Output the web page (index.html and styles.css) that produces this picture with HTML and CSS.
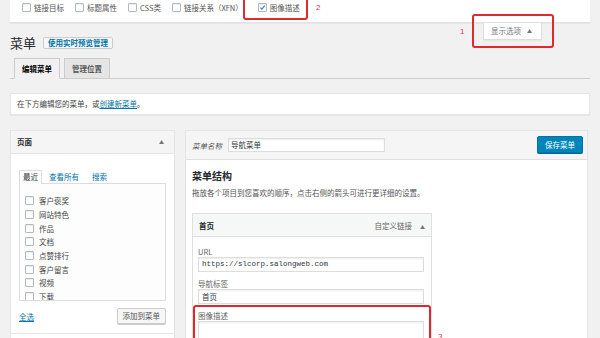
FILE: index.html
```html
<!DOCTYPE html>
<html lang="zh-CN">
<head>
<meta charset="utf-8">
<title>菜单</title>
<link rel="stylesheet" href="styles.css">
</head>
<body>
<div class="wrap">
  <div class="screen-options">
    <label class="opt"><span class="cb"></span>链接目标</label>
    <label class="opt"><span class="cb"></span>标题属性</label>
    <label class="opt"><span class="cb"></span>CSS类</label>
    <label class="opt"><span class="cb"></span>链接关系（XFN）</label>
    <label class="opt opt-last"><span class="cb"><svg viewBox="0 0 10 10" width="9" height="9"><path d="M2 5.2 L4.1 7.3 L8.2 2.2" fill="none" stroke="#1e8cbe" stroke-width="1.6"/></svg></span>图像描述</label>
  </div>
  <div class="meta-links"><span class="meta-tab">显示选项<span class="caret">▲</span></span></div>
  <h1 class="page-title">菜单<span class="title-action">使用实时预览管理</span></h1>
  <div class="nav-tabs"><span class="tab active">编辑菜单</span><span class="tab">管理位置</span></div>
  <div class="notice">在下方编辑您的菜单，或<a class="link">创建新菜单</a>。</div>
  <div class="columns">
    <div class="side">
      <div class="acc">
        <div class="acc-title">页面<span class="arrow">▲</span></div>
        <div class="acc-body">
          <ul class="ptabs"><li class="ptab active">最近</li><li class="ptab">查看所有</li><li class="ptab">搜索</li></ul>
          <div class="plist">
            <label class="item"><span class="cb"></span>客户褒奖</label>
            <label class="item"><span class="cb"></span>网站特色</label>
            <label class="item"><span class="cb"></span>作品</label>
            <label class="item"><span class="cb"></span>文档</label>
            <label class="item"><span class="cb"></span>点赞排行</label>
            <label class="item"><span class="cb"></span>客户留言</label>
            <label class="item"><span class="cb"></span>视频</label>
            <label class="item"><span class="cb"></span>下载</label>
          </div>
          <div class="pactions"><a class="link">全选</a><span class="btn">添加到菜单</span></div>
        </div>
      </div>
      <div class="acc"><div class="acc-title acc-title-next"></div></div>
    </div>
    <div class="manage">
      <div class="manage-head">
        <label class="menu-name"><span class="mn-label">菜单名称</span><span class="input name-input">导航菜单</span></label>
        <span class="btn-primary">保存菜单</span>
      </div>
      <div class="manage-body">
        <h3 class="struct-title">菜单结构</h3>
        <p class="desc">拖放各个项目到您喜欢的顺序，点击右侧的箭头可进行更详细的设置。</p>
        <div class="menu-item">
          <div class="mi-head"><span class="mi-title">首页</span><span class="mi-type">自定义链接<span class="arrow">▲</span></span></div>
          <div class="mi-body">
            <div class="field"><span class="flabel">URL</span><span class="input mono">https://slcorp.salongweb.com</span></div>
            <div class="field"><span class="flabel">导航标签</span><span class="input">首页</span></div>
            <div class="field"><span class="flabel">图像描述</span><span class="input textarea"></span></div>
          </div>
        </div>
      </div>
    </div>
  </div>
</div>
<div class="mark mark1"></div>
<div class="mark mark2"></div>
<div class="mark mark3"></div>
<span class="num num1">1</span>
<span class="num num2">2</span>
<span class="num num3">3</span>
</body>
</html>
```
FILE: styles.css
```css
* { box-sizing: border-box; }
html, body { margin: 0; padding: 0; }
body {
  background: #f1f1f1;
  font-family: "Noto Sans CJK SC", "Noto Sans", sans-serif;
  font-size: 7.5px;
  color: #444;
  width: 600px;
  height: 338px;
  overflow: hidden;
  position: relative;
}
.wrap { padding: 0 10px; }

.cb {
  display: inline-flex;
  align-items: center;
  justify-content: center;
  width: 9px;
  height: 9px;
  border: 1px solid #b4b9be;
  background: #fff;
  border-radius: 1px;
  box-shadow: inset 0 1px 1px rgba(0,0,0,.08);
  flex: none;
}
.cb svg { display: block; }

.screen-options {
  height: 23px;
  background: #fff;
  border-bottom: 1px solid #e2e2e2;
  box-shadow: 0 1px 1px rgba(0,0,0,.04);
  display: flex;
  align-items: flex-start;
  gap: 11px;
  padding: 2px 12px 0;
}
.opt { display: flex; align-items: center; gap: 3px; height: 11px; line-height: 11px; color: #555; }
.opt-last { margin-left: 4px; }

.meta-links { float: right; margin-right: 48px; }
.meta-tab {
  display: block;
  height: 17px;
  line-height: 16px;
  padding: 0 9px 0 7px;
  background: #fff;
  border: 1px solid #ddd;
  border-top: none;
  box-shadow: 0 1px 1px rgba(0,0,0,.04);
  color: #72777c;
}
.caret { font-size: 5px; margin-left: 6px; vertical-align: 1px; color: #72777c; }

.page-title {
  margin: 12px 0 0;
  font-size: 13px;
  line-height: 16px;
  font-weight: 400;
  color: #23282d;
  display: flex;
  align-items: center;
  gap: 7px;
}
.title-action {
  font-size: 7.5px;
  font-weight: 600;
  line-height: 10px;
  color: #0073aa;
  background: #f7f7f7;
  border: 1px solid #ccc;
  border-radius: 2px;
  padding: 0 4px;
}

.nav-tabs {
  clear: both;
  margin-top: 7px;
  display: flex;
  align-items: flex-end;
  gap: 4px;
  padding-left: 4px;
  border-bottom: 1px solid #ccc;
  height: 21px;
}
.tab {
  line-height: 19px;
  padding: 0 7px;
  border: 1px solid #ccc;
  margin-bottom: -1px;
  background: #e5e5e5;
  color: #555;
  font-weight: 600;
}
.tab.active { background: #f1f1f1; color: #000; border-bottom-color: #f1f1f1; }

.notice {
  margin-top: 14px;
  height: 22px;
  line-height: 20px;
  padding: 0 6px;
  background: #fff;
  border: 1px solid #e5e5e5;
  box-shadow: 0 1px 1px rgba(0,0,0,.04);
  color: #444;
}
.link { color: #0073aa; text-decoration: underline; }

.columns {
  margin-top: 15px;
  margin-right: 2px;
  display: grid;
  grid-template-columns: 165px 1fr;
  gap: 10px;
  align-items: start;
}

.acc { border: 1px solid #e5e5e5; background: #fff; box-shadow: 0 1px 1px rgba(0,0,0,.04); }
.acc + .acc { border-top: none; }
.acc-title {
  height: 23px;
  line-height: 22px;
  padding: 0 10px 0 6px;
  background: #f5f5f5;
  border-bottom: 1px solid #e5e5e5;
  font-weight: 600;
  color: #23282d;
  display: flex;
  justify-content: space-between;
}
.acc-title-next { background: #fff; }
.arrow { font-size: 5px; color: #72777c; font-weight: 400; }
.acc-body { padding: 16px 8px 9px; }
.ptabs { list-style: none; margin: 0; padding: 0; display: flex; gap: 1px; position: relative; z-index: 1; }
.ptab { line-height: 12px; padding: 0 5px; color: #0073aa; border: 1px solid transparent; border-bottom: none; }
.ptab.active { color: #32373c; background: #fdfdfd; border-color: #ddd; padding: 0 3px; margin-bottom: -1px; }
.plist {
  height: 118px;
  overflow: hidden;
  border: 1px solid #ddd;
  background: #fdfdfd;
  padding: 10px 5px 0;
}
.item { display: flex; align-items: center; gap: 5px; height: 13.7px; color: #444; }
.pactions { margin-top: 7px; display: flex; justify-content: space-between; align-items: center; padding-left: 0; }
.btn {
  height: 16px;
  line-height: 14px;
  padding: 0 5px;
  background: #f7f7f7;
  border: 1px solid #ccc;
  border-radius: 2px;
  box-shadow: 0 1px 0 #ccc;
  color: #555;
}

.manage { border: 1px solid #e5e5e5; background: #fff; box-shadow: 0 1px 1px rgba(0,0,0,.04); height: 240px; }
.manage-head {
  height: 29px;
  background: #f5f5f5;
  border-bottom: 1px solid #dfdfdf;
  display: flex;
  align-items: center;
  justify-content: space-between;
  padding: 0 4px 0 6px;
}
.menu-name { display: flex; align-items: center; gap: 6px; }
.mn-label { font-style: italic; color: #555; }
.input {
  display: block;
  background: #fff;
  border: 1px solid #ddd;
  box-shadow: inset 0 1px 2px rgba(0,0,0,.07);
  color: #32373c;
  height: 15px;
  line-height: 13px;
  padding: 0 3px;
}
.name-input { width: 157px; height: 14px; line-height: 12px; padding: 0 2px; }
.btn-primary {
  height: 17px;
  line-height: 15px;
  padding: 0 7px;
  background: #0085ba;
  border: 1px solid #0073aa;
  border-radius: 2px;
  box-shadow: 0 1px 0 #006799;
  color: #fff;
  margin-top: -1px;
}
.manage-body { padding: 9px 6px 0; }
.struct-title { margin: 0; font-size: 10px; line-height: 13px; font-weight: 600; color: #23282d; }
.desc { margin: 6px 0 0; line-height: 10px; color: #555; }
.menu-item { width: 240px; margin-top: 15px; }
.mi-head {
  height: 24px;
  border: 1px solid #dfdfdf;
  background: #f6f7f7;
  display: flex;
  align-items: center;
  justify-content: space-between;
  padding: 0 6px;
}
.mi-title { font-weight: 600; color: #23282d; }
.mi-type { color: #666; }
.mi-type .arrow { margin-left: 8px; }
.mi-body { border: 1px solid #dfdfdf; border-top: none; padding: 10px 7px 0 5px; height: 120px; }
.field + .field { margin-top: 7px; }
.flabel { display: block; line-height: 10px; color: #666; }
.mono { font-family: "Liberation Mono", monospace; font-size: 7.5px; }
.textarea { height: 30px; }

.mark { position: absolute; border: 2px solid #e0282d; border-radius: 3px; }
.mark1 { left: 472px; top: 14px; width: 82px; height: 34px; }
.mark2 { left: 243px; top: -4px; width: 65px; height: 24px; }
.mark3 { left: 193px; top: 305px; width: 238px; height: 50px; }
.num { position: absolute; color: #dc3262; font-family: "Liberation Sans", sans-serif; font-size: 8px; line-height: 10px; }
.num1 { left: 460px; top: 27px; }
.num2 { left: 316px; top: 3px; }
.num3 { left: 438px; top: 332px; }
```
